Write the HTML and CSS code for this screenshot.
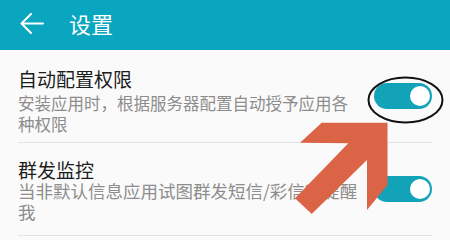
FILE: index.html
```html
<!DOCTYPE html>
<html lang="zh-CN">
<head>
<meta charset="utf-8">
<title>设置</title>
<link rel="stylesheet" href="styles.css">
</head>
<body>
<div class="screen">
  <header class="appbar">
    <svg class="back" width="24" height="22" viewBox="0 0 24 22">
      <path d="M23 10.5H1.5M11 1L1.5 10.5L11 20" fill="none" stroke="#fff" stroke-width="2" stroke-linecap="round" stroke-linejoin="round"/>
    </svg>
    <h1 class="title">设置</h1>
  </header>
  <div class="list">
    <div class="row row-a">
      <div class="text">
        <div class="label">自动配置权限</div>
        <div class="desc">安装应用时，根据服务器配置自动授予应用各种权限</div>
      </div>
      <div class="toggle"><span class="knob"></span></div>
    </div>
    <div class="row row-b">
      <div class="text">
        <div class="label">群发监控</div>
        <div class="desc">当非默认信息应用试图群发短信/彩信时提醒我</div>
      </div>
      <div class="toggle"><span class="knob"></span></div>
    </div>
  </div>
  <svg class="annot" width="450" height="240" viewBox="0 0 450 240">
    <ellipse cx="405.5" cy="100" rx="37" ry="22.5" fill="none" stroke="#111" stroke-width="2"/>
    <polygon points="321.7,122.7 387.5,122.7 387.5,185 367,210 367,160 311.7,214 295,198.3 348.3,143.3 300,142.7" fill="#dc6446"/>
  </svg>
</div>
</body>
</html>
```

FILE: styles.css
```css
html, body {
  margin: 0;
  padding: 0;
}
body {
  width: 450px;
  height: 240px;
  overflow: hidden;
  background: #fafafa;
  font-family: "Noto Sans CJK SC", "Noto Sans", sans-serif;
}
.screen {
  position: relative;
  width: 450px;
  height: 240px;
}
.appbar {
  height: 50px;
  background: #0aa6bf;
  display: flex;
  align-items: center;
  padding-left: 20px;
  box-sizing: border-box;
}
.back {
  display: block;
  margin-top: -3px;
}
.title {
  margin: 0 0 0 25px;
  font-size: 22px;
  font-weight: 400;
  color: #fff;
  line-height: 26px;
  margin-top: -4px;
}
.list {
  padding: 0 18px;
}
.row {
  display: flex;
  align-items: center;
  gap: 14px;
  border-bottom: 1px solid #e4e4e4;
  height: 93px;
  box-sizing: border-box;
}
.text {
  flex: 1;
  min-width: 0;
  align-self: flex-start;
}
.label {
  font-size: 19px;
  line-height: 24px;
  color: #1c1c1c;
}
.desc {
  color: #8d8d8d;
  line-height: 21px;
}
.row-a .text {
  padding-top: 16.5px;
}
.row-a .desc {
  font-size: 16.5px;
  margin-top: 2px;
}
.row-b .text {
  padding-top: 16px;
}
.row-b .label {
  line-height: 21px;
}
.row-b .desc {
  font-size: 17.5px;
}
.toggle {
  flex: none;
  width: 58px;
  height: 26px;
  border-radius: 13px;
  background: #12a3b9;
  display: flex;
  align-items: center;
  justify-content: flex-end;
  padding-right: 2px;
  box-sizing: border-box;
}
.knob {
  width: 20px;
  height: 20px;
  border-radius: 50%;
  background: #fff;
}
.annot {
  position: absolute;
  left: 0;
  top: 0;
  pointer-events: none;
}
```
